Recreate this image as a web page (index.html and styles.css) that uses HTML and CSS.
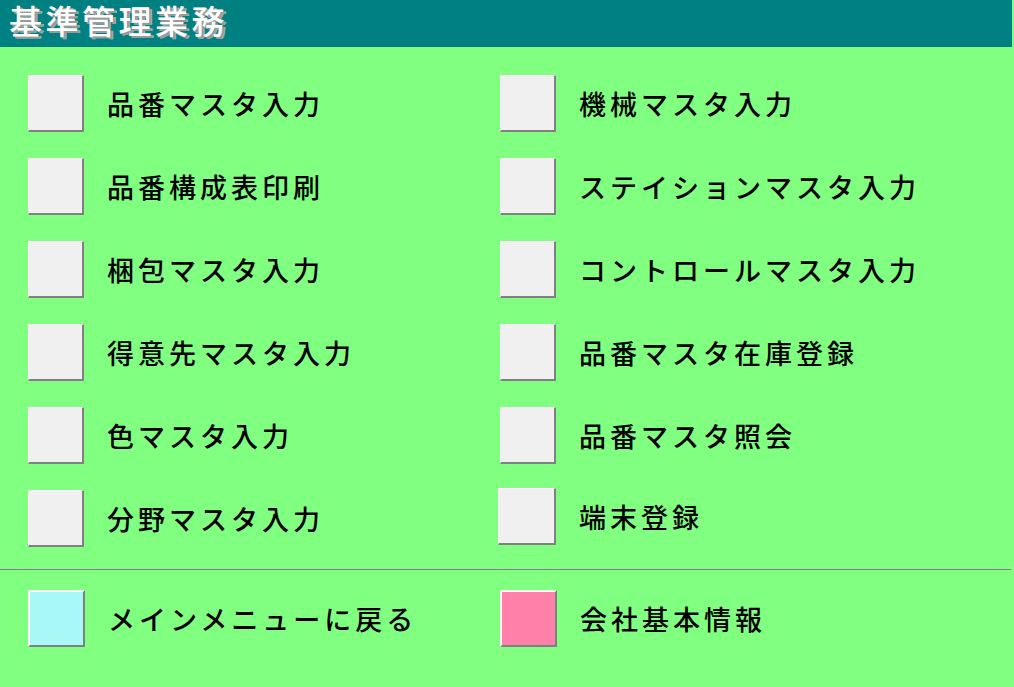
FILE: index.html
```html
<!DOCTYPE html>
<html lang="ja">
<head>
<meta charset="utf-8">
<title>基準管理業務</title>
<link rel="stylesheet" href="styles.css">
</head>
<body>
<header class="titlebar">
  <h1 class="title">基準管理業務</h1>
</header>
<main class="menu">
  <div class="item"><button class="btn"></button><span class="label">品番マスタ入力</span></div>
  <div class="item"><button class="btn"></button><span class="label">機械マスタ入力</span></div>
  <div class="item"><button class="btn"></button><span class="label">品番構成表印刷</span></div>
  <div class="item"><button class="btn"></button><span class="label">ステイションマスタ入力</span></div>
  <div class="item"><button class="btn"></button><span class="label">梱包マスタ入力</span></div>
  <div class="item"><button class="btn"></button><span class="label">コントロールマスタ入力</span></div>
  <div class="item"><button class="btn"></button><span class="label">得意先マスタ入力</span></div>
  <div class="item"><button class="btn"></button><span class="label">品番マスタ在庫登録</span></div>
  <div class="item"><button class="btn"></button><span class="label">色マスタ入力</span></div>
  <div class="item"><button class="btn"></button><span class="label">品番マスタ照会</span></div>
  <div class="item"><button class="btn"></button><span class="label">分野マスタ入力</span></div>
  <div class="item item-shift"><button class="btn btn-wide"></button><span class="label">端末登録</span></div>
</main>
<hr class="sep">
<footer class="menu bottom">
  <div class="item"><button class="btn btn-cyan"></button><span class="label">メインメニューに戻る</span></div>
  <div class="item"><button class="btn btn-pink"></button><span class="label">会社基本情報</span></div>
</footer>
</body>
</html>
```
FILE: styles.css
```css
html, body {
  margin: 0;
  padding: 0;
}
body {
  width: 1014px;
  height: 687px;
  background: #80ff80;
  font-family: "Noto Sans CJK JP", "Noto Sans", sans-serif;
  overflow: hidden;
}
.titlebar {
  width: 1012px;
  height: 47px;
  background: #008080;
  box-sizing: border-box;
  padding: 0 0 0 9px;
}
.title {
  margin: 0;
  font-size: 33px;
  line-height: 40px;
  font-weight: 500;
  color: #ffffff;
  letter-spacing: 3.5px;
  text-shadow: 2px 2px 0 #9a9a9a, 3px 2px 0 #b0b0b0;
}
.menu {
  display: grid;
  grid-template-columns: 472px auto;
  row-gap: 26px;
  padding: 28px 0 0 28px;
}
.item {
  display: flex;
  align-items: center;
  gap: 23px;
}
.item-shift {
  margin: -4px 0 0 -2px;
}
.btn {
  width: 56px;
  height: 57px;
  box-sizing: border-box;
  margin: 0;
  padding: 0;
  background: #f0f0f0;
  border-style: solid;
  border-width: 1px 2px 2px 1px;
  border-color: #ffffff #808080 #808080 #ffffff;
}
.btn-wide {
  width: 58px;
}
.btn-cyan {
  width: 57px;
  background: #a8f8f8;
  border-width: 2px 2px 2px 2px;
}
.btn-pink {
  width: 57px;
  background: #ff80a8;
  border-width: 2px 2px 2px 2px;
}
.label {
  font-size: 27px;
  line-height: 32px;
  letter-spacing: 4px;
  font-weight: 500;
  color: #000000;
  white-space: nowrap;
}
.sep {
  width: 1011px;
  margin: 22px 0 0 0;
  border: none;
  border-top: 1px solid #808080;
  height: 0;
}
.bottom {
  padding-top: 20px;
}
```
